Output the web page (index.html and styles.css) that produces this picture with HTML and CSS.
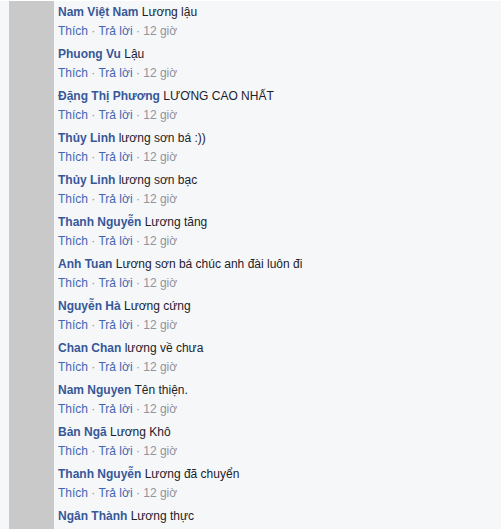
FILE: index.html
```html
<!DOCTYPE html>
<html>
<head>
<meta charset="utf-8">
<link rel="stylesheet" href="styles.css">
</head>
<body>
<div class="page">
  <div class="gutter"></div>
  <div class="bar"></div>
  <div class="comments">
    <div class="comment"><div class="line"><a class="name">Nam Việt Nam</a> Lương lậu</div><div class="meta"><a>Thích</a> · <a>Trả lời</a> · <span class="time">12 giờ</span></div></div>
    <div class="comment"><div class="line"><a class="name">Phuong Vu</a> Lậu</div><div class="meta"><a>Thích</a> · <a>Trả lời</a> · <span class="time">12 giờ</span></div></div>
    <div class="comment"><div class="line"><a class="name">Đặng Thị Phương</a> LƯƠNG CAO NHẤT</div><div class="meta"><a>Thích</a> · <a>Trả lời</a> · <span class="time">12 giờ</span></div></div>
    <div class="comment"><div class="line"><a class="name">Thủy Linh</a> lương sơn bá :))</div><div class="meta"><a>Thích</a> · <a>Trả lời</a> · <span class="time">12 giờ</span></div></div>
    <div class="comment"><div class="line"><a class="name">Thủy Linh</a> lương sơn bạc</div><div class="meta"><a>Thích</a> · <a>Trả lời</a> · <span class="time">12 giờ</span></div></div>
    <div class="comment"><div class="line"><a class="name">Thanh Nguyễn</a> Lương tăng</div><div class="meta"><a>Thích</a> · <a>Trả lời</a> · <span class="time">12 giờ</span></div></div>
    <div class="comment"><div class="line"><a class="name">Anh Tuan</a> Lương sơn bá chúc anh đài luôn đi</div><div class="meta"><a>Thích</a> · <a>Trả lời</a> · <span class="time">12 giờ</span></div></div>
    <div class="comment"><div class="line"><a class="name">Nguyễn Hà</a> Lương cứng</div><div class="meta"><a>Thích</a> · <a>Trả lời</a> · <span class="time">12 giờ</span></div></div>
    <div class="comment"><div class="line"><a class="name">Chan Chan</a> lương về chưa</div><div class="meta"><a>Thích</a> · <a>Trả lời</a> · <span class="time">12 giờ</span></div></div>
    <div class="comment"><div class="line"><a class="name">Nam Nguyen</a> Tên thiện.</div><div class="meta"><a>Thích</a> · <a>Trả lời</a> · <span class="time">12 giờ</span></div></div>
    <div class="comment"><div class="line"><a class="name">Bản Ngã</a> Lương Khô</div><div class="meta"><a>Thích</a> · <a>Trả lời</a> · <span class="time">12 giờ</span></div></div>
    <div class="comment"><div class="line"><a class="name">Thanh Nguyễn</a> Lương đã chuyển</div><div class="meta"><a>Thích</a> · <a>Trả lời</a> · <span class="time">12 giờ</span></div></div>
    <div class="comment"><div class="line"><a class="name">Ngân Thành</a> Lương thực</div></div>
  </div>
</div>
</body>
</html>
```

FILE: styles.css
```css
html, body {
  margin: 0;
  padding: 0;
  background: #ffffff;
  overflow: hidden;
}
.page {
  display: flex;
  height: 528px;
  margin-top: 1px;
  width: 501px;
  background: #f6f7f9;
  font-family: "Liberation Sans", Arial, sans-serif;
  font-size: 12px;
  overflow: hidden;
}
.gutter {
  width: 9px;
  flex: none;
}
.bar {
  width: 45px;
  flex: none;
  background: #c9c9c9;
}
.comments {
  padding-left: 4px;
  padding-top: 3px;
  display: flex;
  flex-direction: column;
}
.comment {
  margin-bottom: 7px;
}
.line {
  color: #1d2129;
  line-height: 16px;
  white-space: nowrap;
}
.name {
  color: #365899;
  font-weight: bold;
}
.meta {
  margin-top: 3px;
  line-height: 16px;
  color: #90949c;
  white-space: nowrap;
}
.meta a {
  color: #4267b2;
}
.time {
  color: #90949c;
}
```
